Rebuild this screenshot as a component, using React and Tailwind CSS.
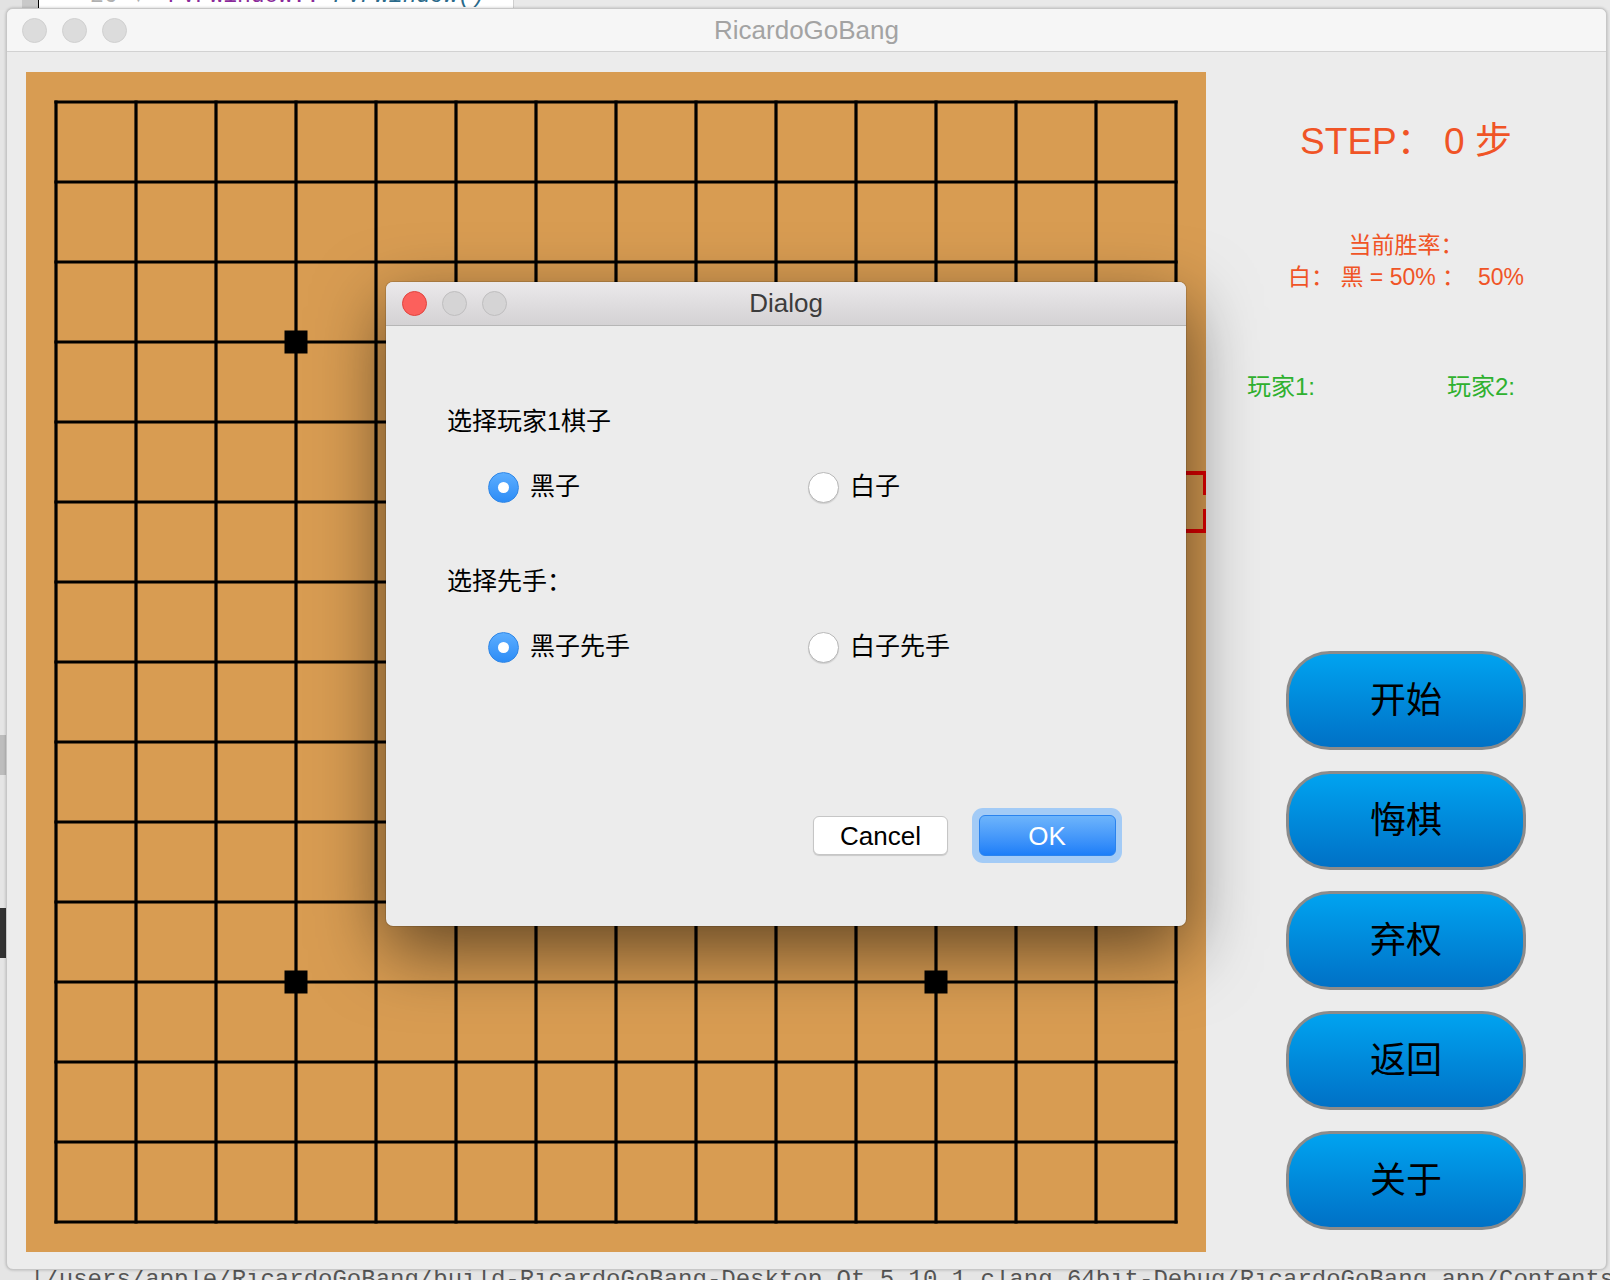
import React from 'react'

// board geometry: 15 lines, 80px apart, 30px inset
const LINES = Array.from({ length: 15 }, (_, i) => 30 + i * 80)
const STARS = [[3, 3], [11, 3], [3, 11], [11, 11], [7, 7]]
const BUTTONS = ['开始', '悔棋', '弃权', '返回', '关于']

function Board() {
	const cx = 30 + 14 * 80
	const cy = 30 + 5 * 80
	const h = 29
	const a = 22
	return (
		<svg width="1180" height="1180" className="block shrink-0">
			<rect width="1180" height="1180" fill="#d89c52" />
			{LINES.map((p) => (
				<line key={'h' + p} x1="30" y1={p} x2="1150" y2={p} stroke="#000" strokeWidth="3.2" strokeLinecap="square" />
			))}
			{LINES.map((p) => (
				<line key={'v' + p} x1={p} y1="30" x2={p} y2="1150" stroke="#000" strokeWidth="3.2" strokeLinecap="square" />
			))}
			{STARS.map(([i, j]) => (
				<rect key={i + '-' + j} x={30 + i * 80 - 11.5} y={30 + j * 80 - 11.5} width="23" height="23" fill="#000" />
			))}
			{/* hover marker */}
			<path
				d={`M${cx - h + a} ${cy - h} H${cx - h} V${cy - h + a}
				M${cx + h - a} ${cy - h} H${cx + h} V${cy - h + a}
				M${cx - h + a} ${cy + h} H${cx - h} V${cy + h - a}
				M${cx + h - a} ${cy + h} H${cx + h} V${cy + h - a}`}
				stroke="#e00000"
				strokeWidth="4"
				fill="none"
			/>
		</svg>
	)
}

function SidePanel() {
	return (
		<div className="flex-1 min-w-0 flex flex-col items-center">
			<div className="mt-[48px] h-[44px] leading-[44px] text-[37px] text-[#f05426] whitespace-pre">STEP： 0 步</div>
			<div className="mt-[65px] h-[32px] leading-[32px] text-[23px] text-[#f05426]">当前胜率：</div>
			<div className="h-[32px] leading-[32px] text-[23px] text-[#f05426] whitespace-pre">白： 黑 = 50% ：  50%</div>
			<div className="mt-[78px] w-full flex pl-[41px] h-[32px] leading-[32px] text-[24px] text-[#2fb12f]">
				<span className="w-[200px]">玩家1:</span>
				<span>玩家2:</span>
			</div>
			<div className="mt-[248px] flex flex-col gap-[21px]">
				{BUTTONS.map((b) => (
					<button
						key={b}
						className="w-[240px] h-[99px] rounded-[44px] border-[3px] border-[#8b8b8b] bg-gradient-to-b from-[#00a3f0] to-[#0071c6] text-[36px] text-black flex items-center justify-center"
					>
						{b}
					</button>
				))}
			</div>
		</div>
	)
}

function Radio({ checked, label }) {
	return (
		<div className="w-[320px] flex items-center gap-[11px] h-[34px]">
			{checked ? (
				<span className="w-[31px] h-[31px] rounded-full bg-gradient-to-b from-[#5caeff] to-[#2b8cf6] border border-[#2f86e6] flex items-center justify-center">
					<span className="w-[11px] h-[11px] rounded-full bg-white" />
				</span>
			) : (
				<span className="w-[31px] h-[31px] rounded-full bg-white border border-[#b8b8b8] shadow-[0_1px_1px_rgba(0,0,0,0.12)]" />
			)}
			<span className="text-[25px] text-black">{label}</span>
		</div>
	)
}

function Dialog() {
	return (
		<div className="absolute left-[386px] top-[282px] w-[800px] h-[644px] rounded-[7px] overflow-hidden bg-[#ececec] shadow-[0_24px_70px_rgba(0,0,0,0.55),0_0_0_1px_rgba(0,0,0,0.12)] flex flex-col">
			<div className="h-[44px] shrink-0 grid grid-cols-[1fr_auto_1fr] items-center bg-gradient-to-b from-[#ebe9eb] to-[#d4d2d4] border-b border-[#b6b6b6]">
				<div className="flex items-center gap-[15px] pl-[16px]">
					<span className="w-[25px] h-[25px] rounded-full bg-[#fc605c] border border-[#e0443e]" />
					<span className="w-[25px] h-[25px] rounded-full bg-[#d5d4d5] border border-[#bfbebf]" />
					<span className="w-[25px] h-[25px] rounded-full bg-[#d5d4d5] border border-[#bfbebf]" />
				</div>
				<div className="text-[26px] text-[#3c3c3c]">Dialog</div>
				<div />
			</div>
			<div className="flex flex-col pl-[61px]">
				<div className="mt-[78px] h-[34px] leading-[34px] text-[25px] text-black">选择玩家1棋子</div>
				<div className="mt-[32px] ml-[41px] flex">
					<Radio checked label="黑子" />
					<Radio label="白子" />
				</div>
				<div className="mt-[60px] h-[34px] leading-[34px] text-[25px] text-black">选择先手：</div>
				<div className="mt-[32px] ml-[41px] flex">
					<Radio checked label="黑子先手" />
					<Radio label="白子先手" />
				</div>
			</div>
			<div className="mt-[144px] flex items-center justify-end gap-[24px] pr-[64px]">
				<button className="w-[135px] h-[39px] rounded-[6px] bg-white border border-[#c6c6c6] shadow-[0_1px_1px_rgba(0,0,0,0.15)] text-[26px] text-black leading-none">
					Cancel
				</button>
				<div className="w-[150px] h-[55px] rounded-[11px] bg-[#a3cbf6] flex items-center justify-center">
					<button className="w-[137px] h-[41px] rounded-[6px] bg-gradient-to-b from-[#6db4fb] to-[#1b7ef8] border border-[#2a83ee] text-[26px] text-white leading-none">
						OK
					</button>
				</div>
			</div>
		</div>
	)
}

export default function App() {
	return (
		<div className="relative w-[1610px] h-[1280px] overflow-hidden bg-[#e5e5e5] font-['Liberation_Sans','Noto_Sans_CJK_SC',sans-serif]">
			{/* editor behind the window */}
			<div className="absolute top-0 left-0 w-full h-[10px] flex overflow-hidden bg-[#e8e8e8]">
				<div className="w-[22px] bg-[#e2e2e2]" />
				<div className="w-[16px] bg-[#c9c9c9]" />
				<div className="w-[475px] bg-white border-l border-black flex font-['Liberation_Mono',monospace] text-[23px] leading-[23px] -mt-[15px]">
					<span className="ml-[51px] w-[78px] text-[#b0b0b0]">26 ▼</span>
					<span className="text-[#8a2a9a]">PVPWindow::</span>
					<span className="italic text-[#2a6a8a]">~PVPWindow()</span>
				</div>
				<div className="flex-1 bg-[#e9e9e9] border-l border-[#cfcfcf]" />
			</div>
			{/* left edge bits */}
			<div className="absolute left-0 top-[735px] w-[6px] h-[40px] bg-[#bdbdbd]" />
			<div className="absolute left-0 top-[908px] w-[6px] h-[50px] bg-[#333]" />
			{/* terminal line behind the window */}
			<div className="absolute left-0 top-[1268px] w-full h-[12px] flex overflow-hidden">
				<div className="ml-[23px] w-[13px] h-full bg-[#b4b4b4]" />
				<div className="ml-[7px] font-['Liberation_Mono',monospace] text-[24px] leading-[24px] text-[#555] whitespace-nowrap">
					|/users/apple/RicardoGoBang/build-RicardoGoBang-Desktop_Qt_5_10_1_clang_64bit-Debug/RicardoGoBang.app/Contents/MacOS
				</div>
			</div>

			{/* main window */}
			<div className="absolute left-[6px] top-[8px] w-[1601px] h-[1262px] rounded-[7px] overflow-hidden bg-[#ececec] border border-[#c7c7c7] shadow-[0_0_3px_rgba(0,0,0,0.25)] flex flex-col">
				<div className="h-[43px] shrink-0 grid grid-cols-[1fr_auto_1fr] items-center bg-[#f6f6f6] border-b border-[#d2d2d2]">
					<div className="flex items-center gap-[15px] pl-[15px]">
						<span className="w-[25px] h-[25px] rounded-full bg-[#dcdcdc] border border-[#d0d0d0]" />
						<span className="w-[25px] h-[25px] rounded-full bg-[#dcdcdc] border border-[#d0d0d0]" />
						<span className="w-[25px] h-[25px] rounded-full bg-[#dcdcdc] border border-[#d0d0d0]" />
					</div>
					<div className="text-[26px] text-[#a3a3a3]">RicardoGoBang</div>
					<div />
				</div>
				<div className="flex flex-1 pl-[19px] pt-[20px]">
					<Board />
					<SidePanel />
				</div>
			</div>

			<Dialog />
		</div>
	)
}
